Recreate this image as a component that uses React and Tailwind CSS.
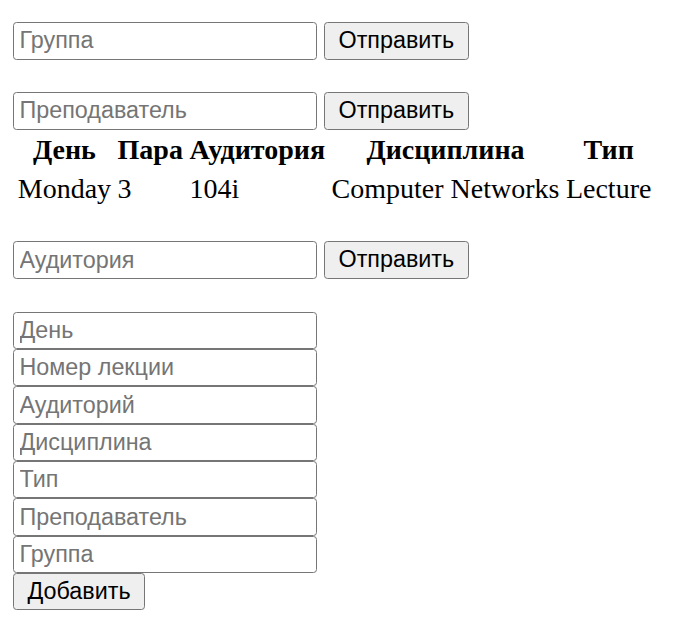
import React from 'react';

const inputCls =
  "block w-[304px] h-[37.33px] border border-[#767676] rounded-[3.5px] bg-white px-[5.5px] py-[1.75px] text-[23.33px] text-black placeholder:text-[#757575] outline-none";
const buttonCls =
  "h-[37.33px] border border-[#767676] rounded-[3.5px] bg-[#efefef] px-[13.5px] text-[23.33px] leading-none text-black";

const SearchForm = ({ placeholder, className = "" }) => (
  <form className={`flex items-start gap-[7px] ${className}`} onSubmit={(e) => e.preventDefault()}>
    <input type="text" placeholder={placeholder} className={inputCls} />
    <button type="submit" className={buttonCls}>Отправить</button>
  </form>
);

const rows = [
  { day: 'Monday', pair: '3', room: '104i', subject: 'Computer Networks', type: 'Lecture' },
];

const App = () => {
  return (
    <div
      className="min-h-screen bg-white pl-[13px] pt-[22.33px] text-black"
      style={{ fontFamily: '"Liberation Serif", serif' }}
    >
      <div className="flex flex-col items-start" style={{ fontFamily: '"Liberation Sans", Arial, sans-serif' }}>
        <SearchForm placeholder="Группа" />
        <SearchForm placeholder="Преподаватель" className="mt-[32.67px]" />
      </div>

      {/* Schedule table */}
      <table className="border-separate border-spacing-[3.5px] text-[28px] leading-[1.149]">
        <thead>
          <tr>
            {['День', 'Пара', 'Аудитория', 'Дисциплина', 'Тип'].map((h) => (
              <th key={h} className="p-[1.75px] font-bold text-center">{h}</th>
            ))}
          </tr>
        </thead>
        <tbody>
          {rows.map((r, i) => (
            <tr key={i}>
              <td className="p-[1.75px]">{r.day}</td>
              <td className="p-[1.75px]">{r.pair}</td>
              <td className="p-[1.75px]">{r.room}</td>
              <td className="p-[1.75px]">{r.subject}</td>
              <td className="p-[1.75px]">{r.type}</td>
            </tr>
          ))}
        </tbody>
      </table>

      <div className="flex flex-col items-start" style={{ fontFamily: '"Liberation Sans", Arial, sans-serif' }}>
        <SearchForm placeholder="Аудитория" className="mt-[31.5px]" />

        {/* Add lesson form */}
        <form className="mt-[33px] flex flex-col items-start" onSubmit={(e) => e.preventDefault()}>
          {['День', 'Номер лекции', 'Аудиторий', 'Дисциплина', 'Тип', 'Преподаватель', 'Группа'].map((p) => (
            <input key={p} type="text" placeholder={p} className={inputCls} />
          ))}
          <button type="submit" className={buttonCls}>Добавить</button>
        </form>
      </div>
    </div>
  );
};

export default App;
